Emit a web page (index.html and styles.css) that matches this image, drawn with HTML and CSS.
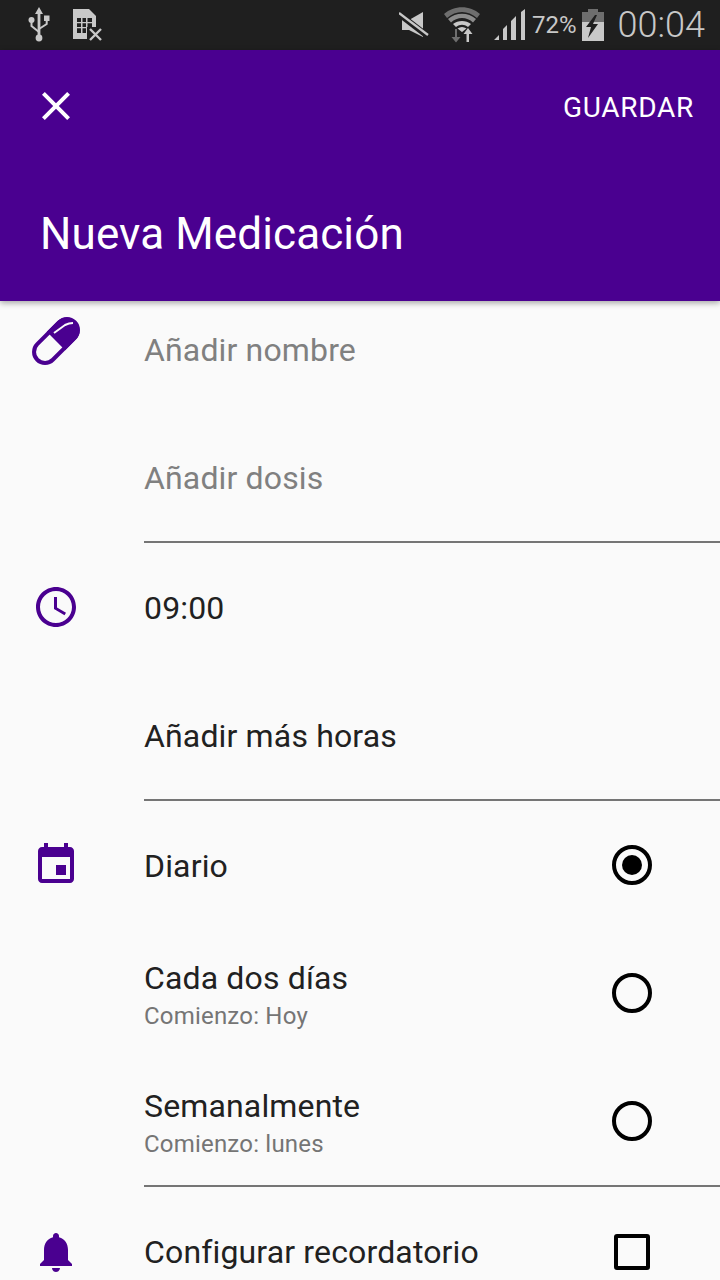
FILE: index.html
```html
<!DOCTYPE html>
<html>
	<head>
		<meta charset="UTF-8">
		<title>Nueva Medicación</title>
		<link rel="stylesheet" href="styles.css">
	</head>
	<body>
		<div class="status">
			<svg class="usb" width="24" height="36" viewBox="0 0 24 36">
				<path fill="#c8c8c8" d="M12 0l4 7h-2.6v23h-2.8V7H8z"/>
				<circle fill="#c8c8c8" cx="12" cy="31" r="3.4"/>
				<circle fill="#c8c8c8" cx="4.5" cy="13" r="3"/>
				<rect fill="#c8c8c8" x="17" y="8.500" width="5.500" height="5.500"/>
				<path fill="none" stroke="#c8c8c8" stroke-width="2" d="M4.500 14v5l7.500 6M19.700 13v4l-7.700 5"/>
			</svg>
			<svg class="sim" width="32" height="34" viewBox="0 0 32 34">
				<path fill="#c8c8c8" d="M1 1h16l7 7v23H1z"/>
				<path fill="#1f1f1f" d="M5 10h15v15H5z"/>
				<path fill="#c8c8c8" d="M9 10h1.500v15H9zM14 10h1.500v15H14zM5 14h15v1.200H5zM5 19h15v1.200H5z"/>
				<path fill="#1f1f1f" d="M15 19h17v15H15z"/>
				<path fill="none" stroke="#c8c8c8" stroke-width="2.400" d="M18 21l11 11M29 21L18 32"/>
			</svg>
			<svg class="mute" width="30" height="30" viewBox="0 0 30 30">
				<path fill="#c8c8c8" d="M3 10h7L24 2v25L10 20H3z"/>
				<path fill="none" stroke="#1f1f1f" stroke-width="6" d="M0 4l30 23"/>
				<path fill="none" stroke="#c8c8c8" stroke-width="2.200" d="M0 3l29 22"/>
			</svg>
			<svg class="wifi" width="36" height="36" viewBox="0 0 36 36">
				<path fill="#6e6e6e" d="M0 7C10-2 26-2 36 7l-3 4C24 3 12 3 3 11z"/>
				<path fill="#8c8c8c" d="M4 12c8-7 20-7 28 0l-3 3.500c-6-6-16-6-22 0z"/>
				<path fill="#c8c8c8" d="M9 17c5-4 13-4 18 0l-3 3c-4-3-8-3-12 0zM13.500 21.500c3-2 6-2 9 0L18 25z"/>
				<path fill="#6e6e6e" d="M13 22v8h3.500L12 35.500 7.500 30H11v-8z"/>
				<path fill="#c8c8c8" d="M24 21l4.500 6H25v8h-2.500v-8H19.500z"/>
			</svg>
			<svg class="signal" width="32" height="32" viewBox="0 0 32 32">
				<path fill="#c8c8c8" d="M0 31l5-5v5zM9 31V20l4-4v15zM17 31V12l5-5v24zM27 31V3l4-3v31z"/>
			</svg>
			<span class="pct">72%</span>
			<svg class="batt" width="22" height="32" viewBox="0 0 22 32">
				<path fill="#6e6e6e" d="M6 0h10v3h6v10H0V3h6z"/>
				<path fill="#c8c8c8" d="M0 13h22v19H0z"/>
				<path fill="#1f1f1f" d="M13 6L4 18h5l-3 11 10-14h-5l4-9z"/>
			</svg>
			<span class="time">00:04</span>
		</div>

		<div class="head">
			<div class="bar">
				<svg class="icon" viewBox="0 0 24 24"><path fill="#fff" d="M19 6.410L17.590 5 12 10.590 6.410 5 5 6.410 10.590 12 5 17.590 6.410 19 12 13.410 17.590 19 19 17.590 13.410 12z"/></svg>
				<span class="save">GUARDAR</span>
			</div>
			<div class="title">Nueva Medicación</div>
		</div>

		<div class="list">
			<div class="group">
				<div class="row">
					<svg class="icon pill" viewBox="0 0 48 48">
						<g transform="rotate(-45 24 24)">
							<rect x="-2.500" y="13" width="53" height="22" rx="11" fill="none" stroke="#4a0090" stroke-width="4"/>
							<path fill="#4a0090" d="M24 11h15a13 13 0 0 1 0 26H24z"/>
						</g>
						<path fill="none" stroke="#fafafa" stroke-width="2" d="M22 16L33 8q4-2 8-2"/>
					</svg>
					<div class="txt hint">Añadir nombre</div>
				</div>
				<div class="row">
					<div class="icon"></div>
					<div class="txt hint">Añadir dosis</div>
				</div>
			</div>

			<div class="group">
				<div class="row">
					<svg class="icon up" viewBox="0 0 24 24"><path fill="#4a0090" d="M11.990 2C6.470 2 2 6.480 2 12s4.470 10 9.990 10C17.520 22 22 17.520 22 12S17.520 2 11.990 2zM12 20c-4.420 0-8-3.580-8-8s3.580-8 8-8 8 3.580 8 8-3.580 8-8 8zm.5-13H11v6l5.250 3.150.75-1.230-4.500-2.670z"/></svg>
					<div class="txt">09:00</div>
				</div>
				<div class="row">
					<div class="icon"></div>
					<div class="txt">Añadir más horas</div>
				</div>
			</div>

			<div class="group">
				<div class="row">
					<svg class="icon up" viewBox="0 0 24 24"><path fill="#4a0090" d="M17 12h-5v5h5v-5zM16 1v2H8V1H6v2H5c-1.110 0-1.990.9-1.990 2L3 19c0 1.100.89 2 2 2h14c1.100 0 2-.9 2-2V5c0-1.100-.9-2-2-2h-1V1h-2zm3 18H5V8h14v11z"/></svg>
					<div class="txt">Diario</div>
					<div class="radio on"></div>
				</div>
				<div class="row">
					<div class="icon"></div>
					<div class="txt two">Cada dos días<div class="sub">Comienzo: Hoy</div></div>
					<div class="radio"></div>
				</div>
				<div class="row">
					<div class="icon"></div>
					<div class="txt two">Semanalmente<div class="sub">Comienzo: lunes</div></div>
					<div class="radio"></div>
				</div>
			</div>

			<div class="group">
				<div class="row">
					<svg class="icon" viewBox="0 0 24 24"><path fill="#4a0090" d="M12 22c1.100 0 2-.9 2-2h-4c0 1.100.89 2 2 2zm6-6v-5c0-3.070-1.640-5.640-4.500-6.320V4c0-.83-.67-1.500-1.500-1.500s-1.500.67-1.500 1.500v.68C7.630 5.360 6 7.920 6 11v5l-2 2v1h16v-1l-2-2z"/></svg>
					<div class="txt">Configurar recordatorio</div>
					<div class="check"></div>
				</div>
			</div>
		</div>
	</body>
</html>
```

FILE: styles.css
```css
html, body{
	margin: 0;
	padding: 0;
	height: 1280px;
	overflow: hidden;
}
body{
	background: #fafafa;
	font-family: Roboto, sans-serif;
	color: #212121;
}

/* status bar */
.status{
	height: 50px;
	background: #1f1f1f;
	color: #c8c8c8;
	display: flex;
	align-items: center;
	box-sizing: border-box;
	padding-left: 27px;
}
.usb{ margin-top: -1px; }
.sim{ margin-left: 21px; }
.mute{ margin-left: auto; }
.wifi{ margin-left: 15px; }
.signal{ margin-left: 14px; }
.pct{
	font-size: 24px;
	margin-left: 6px;
}
.batt{ margin-left: 5px; }
.time{
	font-size: 36px;
	font-weight: 300;
	margin-left: 14px;
	margin-right: 15px;
}

/* purple header */
.head{
	height: 251px;
	background: #4a0090;
	color: #fff;
	position: relative;
	z-index: 2;
	box-shadow: 0 2px 6px rgba(0,0,0,0.35);
}
.bar{
	height: 112px;
	display: flex;
	align-items: center;
	justify-content: space-between;
	padding: 0 26px 0 32px;
}
.save{
	font-size: 28px;
	letter-spacing: 0.7px;
	margin-top: 2px;
}
.title{
	font-size: 44px;
	line-height: 56px;
	letter-spacing: 0.12px;
	margin-top: 44px;
	padding-left: 40px;
}

/* form */
.list{
	margin-top: -15px;
}
.group{
	padding-bottom: 2px;
	position: relative;
}
.group::after{
	content: "";
	height: 2px;
	background: #757575;
	position: absolute;
	left: 144px;
	right: 0;
	bottom: 1px;
}
.row{
	height: 128px;
	display: flex;
	align-items: center;
	padding-left: 32px;
}
.icon{
	width: 48px;
	height: 48px;
	flex: none;
}
.list .icon{
	margin-right: 64px;
}
.list .up{
	margin-top: -2px;
}
.list .pill{
	margin-top: -18px;
}
.txt{
	font-size: 32px;
	line-height: 38px;
	letter-spacing: 0.15px;
	flex: 1;
}
.two{
	padding-top: 6px;
}
.hint{
	color: #808080;
}
.sub{
	font-size: 24px;
	line-height: 38px;
	letter-spacing: 0.2px;
	color: #757575;
}
.radio{
	width: 40px;
	height: 40px;
	box-sizing: border-box;
	border: 4px solid #000;
	border-radius: 50%;
	margin: -2px 68px 0 0;
	display: flex;
	align-items: center;
	justify-content: center;
}
.radio.on::before{
	content: "";
	width: 20px;
	height: 20px;
	border-radius: 50%;
	background: #000;
}
.check{
	width: 36px;
	height: 36px;
	box-sizing: border-box;
	border: 4px solid #000;
	border-radius: 3px;
	margin-right: 70px;
}
```
